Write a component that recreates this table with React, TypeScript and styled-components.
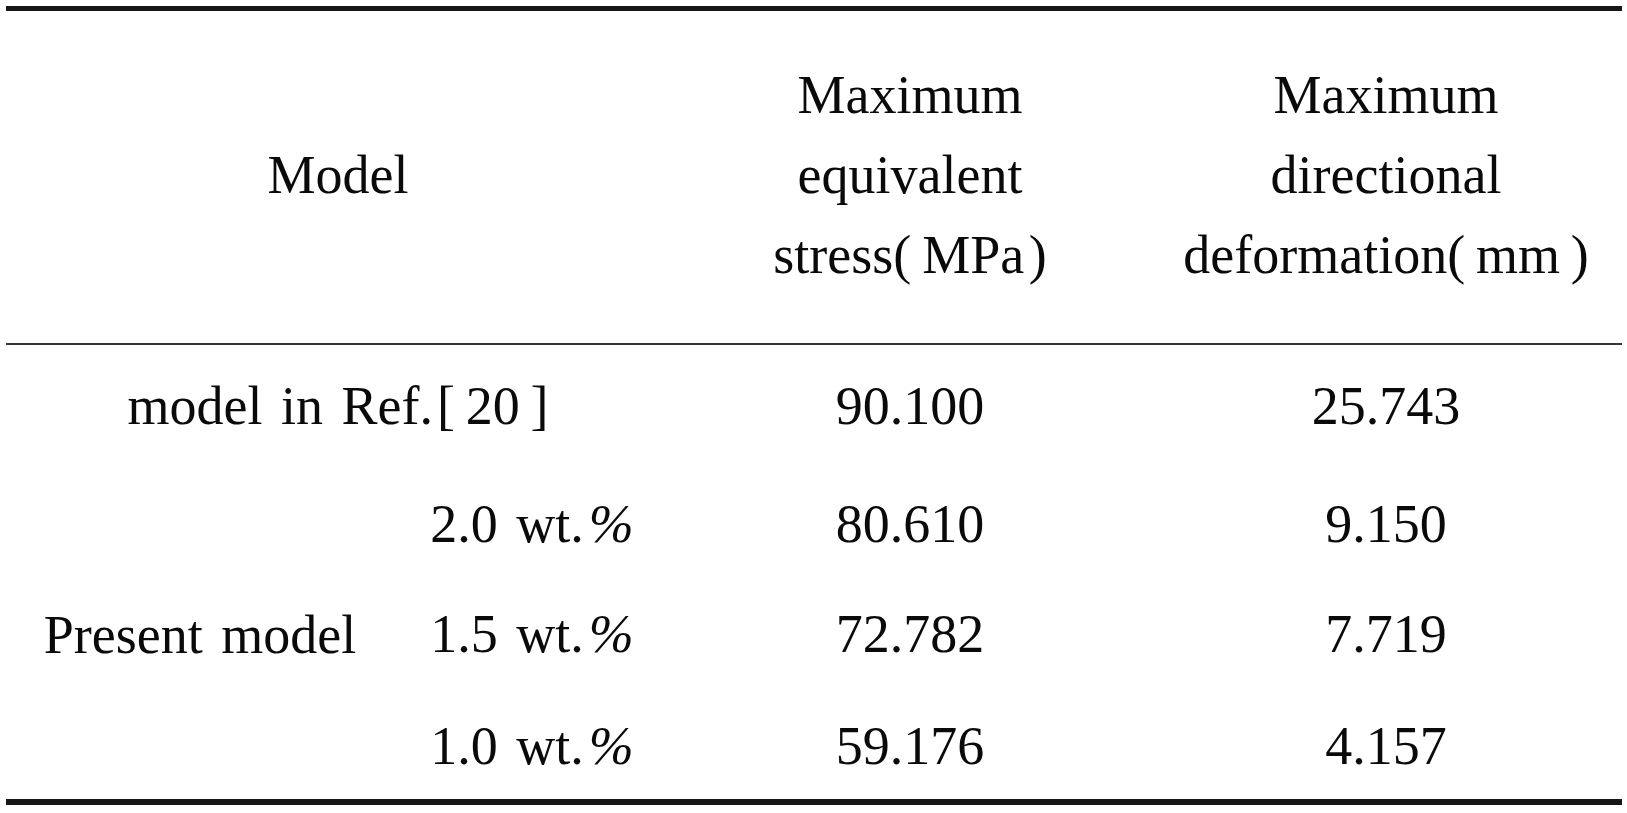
import React from "react";
import styled, { createGlobalStyle } from "styled-components";

const GlobalStyle = createGlobalStyle`
  html, body {
    margin: 0;
    padding: 0;
    background: #ffffff;
  }
  body {
    font-family: "Liberation Serif", "Times New Roman", serif;
    color: #000000;
  }
`;

const Page = styled.div`
  padding: 6px 5px 0 6px;
  width: 1616px;
`;

const Table = styled.div`
  width: 1616px;
  border-top: 5px solid #161616;
  border-bottom: 6px solid #161616;
  font-family: "Liberation Serif", "Times New Roman", serif;
  font-size: 54px;
  line-height: 80px;
  color: #0a0a0a;
`;

const cols = "388px 276px 480px 472px";

const Head = styled.div`
  display: grid;
  grid-template-columns: ${cols};
  padding: 44px 0 48px;
  border-bottom: 2px solid #333333;
`;

const HeadCell = styled.div<{ $span?: number }>`
  grid-column: span ${(p) => p.$span ?? 1};
  display: flex;
  flex-direction: column;
  align-items: center;
  justify-content: center;
  text-align: center;
  white-space: nowrap;
`;

const Body = styled.div`
  display: grid;
  grid-template-columns: ${cols};
  grid-template-rows: 118px 110px 112px 114px;
`;

const Cell = styled.div<{ $span?: number; $rows?: number; $col?: number }>`
  grid-column: ${(p) => (p.$col ? `${p.$col} / span ${p.$span ?? 1}` : `span ${p.$span ?? 1}`)};
  grid-row: span ${(p) => p.$rows ?? 1};
  display: flex;
  align-items: ${(p) => (p.$rows && p.$rows > 1 ? "center" : "flex-start")};
  justify-content: center;
  padding-top: ${(p) => (p.$rows && p.$rows > 1 ? "8.5px" : "21px")};
  white-space: pre;
  word-spacing: 5px;
  box-sizing: border-box;
`;

const Percent = styled.span`
  font-style: italic;
  margin-left: 5px;
`;

const Bracket = styled.span`
  margin-left: 4px;
`;

const rows = [
  { w: "2.0", s: "80.610", d: "9.150" },
  { w: "1.5", s: "72.782", d: "7.719" },
  { w: "1.0", s: "59.176", d: "4.157" },
];

export default function App() {
  return (
    <>
      <GlobalStyle />
      <Page>
        <Table>
          <Head>
            <HeadCell $span={2}>Model</HeadCell>
            <HeadCell>
              <span>Maximum</span>
              <span>equivalent</span>
              <span>stress(&#8201;MPa&#8202;)</span>
            </HeadCell>
            <HeadCell>
              <span>Maximum</span>
              <span>directional</span>
              <span>deformation(&#8201;mm&#8201;)</span>
            </HeadCell>
          </Head>
          <Body>
            <Cell $span={2}>
              model in Ref.<Bracket>[&#8201;20&#8201;]</Bracket>
            </Cell>
            <Cell>90.100</Cell>
            <Cell>25.743</Cell>
            <Cell $col={1} $rows={3}>Present model</Cell>
            {rows.map((r) => (
              <React.Fragment key={r.w}>
                <Cell $col={2}>
                  {r.w} wt.<Percent>%</Percent>
                </Cell>
                <Cell>{r.s}</Cell>
                <Cell>{r.d}</Cell>
              </React.Fragment>
            ))}
          </Body>
        </Table>
      </Page>
    </>
  );
}
